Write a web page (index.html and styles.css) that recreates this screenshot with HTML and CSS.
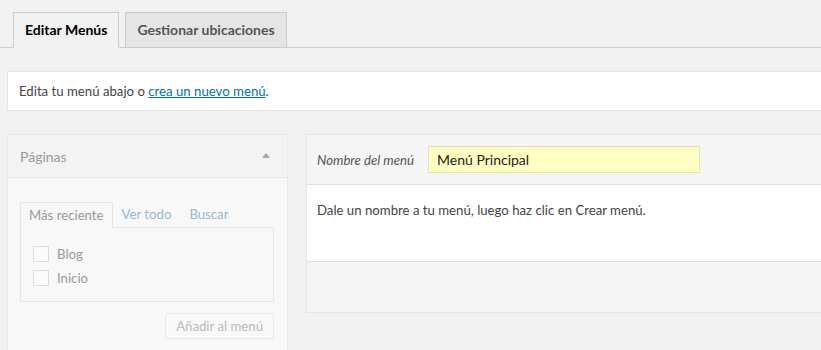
FILE: index.html
```html
<!DOCTYPE html>
<html lang="es">
<head>
<meta charset="utf-8">
<title>Menús</title>
<link rel="stylesheet" href="styles.css">
</head>
<body>
<div class="wrap">
  <nav class="nav-tabs">
    <a class="nav-tab active">Editar Menús</a>
    <a class="nav-tab">Gestionar ubicaciones</a>
  </nav>
  <div class="notice">Edita tu menú abajo o <a class="link">crea un nuevo menú</a>.</div>
  <div class="columns">
    <aside class="side-box">
      <div class="side-head">
        <span class="side-title">Páginas</span>
        <span class="arrow"></span>
      </div>
      <div class="side-body">
        <div class="inner-tabs">
          <span class="inner-tab active">Más reciente</span>
          <span class="inner-tab">Ver todo</span>
          <span class="inner-tab">Buscar</span>
        </div>
        <div class="inner-panel">
          <label class="check-row"><span class="checkbox"></span>Blog</label>
          <label class="check-row"><span class="checkbox"></span>Inicio</label>
        </div>
        <div class="btn-row"><span class="btn">Añadir al menú</span></div>
      </div>
    </aside>
    <section class="menu-box">
      <div class="menu-head">
        <span class="menu-label">Nombre del menú</span>
        <span class="menu-input">Menú Principal</span>
      </div>
      <div class="menu-body">Dale un nombre a tu menú, luego haz clic en Crear menú.</div>
      <div class="menu-foot"></div>
    </section>
  </div>
</div>
</body>
</html>
```

FILE: styles.css
```css
html, body {
  margin: 0;
  padding: 0;
  background: #f1f1f1;
  overflow: hidden;
}
body {
  font-family: Lato, "Liberation Sans", sans-serif;
  font-size: 13.2px;
  color: #444;
  width: 821px;
  height: 350px;
}
.wrap {
  width: 814px;
  padding: 12px 0 0 7px;
}
.nav-tabs {
  display: flex;
  border-bottom: 1px solid #ccc;
  margin-left: -7px;
  padding-left: 13px;
  height: 35px;
}
.nav-tab {
  display: block;
  box-sizing: border-box;
  height: 36px;
  padding: 0 11px;
  line-height: 34px;
  font-size: 14px;
  font-weight: 700;
  color: #555;
  background: #e5e5e5;
  border: 1px solid #ccc;
  margin-right: 6px;
}
.nav-tab.active {
  background: #f1f1f1;
  color: #000;
  border-bottom-color: #f1f1f1;
}
.notice {
  margin-top: 23px;
  height: 40px;
  box-sizing: border-box;
  background: #fff;
  border: 1px solid #e5e5e5;
  border-right: 0;
  padding: 0 11px;
  line-height: 38px;
  color: #444;
}
.link {
  color: #0073aa;
  text-decoration: underline;
}
.columns {
  display: flex;
  align-items: flex-start;
  margin-top: 23px;
  gap: 18px;
}
.side-box {
  width: 281px;
  flex: none;
  box-sizing: border-box;
  border: 1px solid #e9e9e9;
  background: #f8f8f8;
}
.side-head {
  height: 43px;
  box-sizing: border-box;
  border-bottom: 1px solid #e9e9e9;
  background: #f3f3f3;
  display: flex;
  align-items: center;
  justify-content: space-between;
  padding: 0 17px 0 12px;
}
.side-title {
  font-size: 14px;
  color: #999;
}
.arrow {
  width: 0;
  height: 0;
  border-left: 4px solid transparent;
  border-right: 4px solid transparent;
  border-bottom: 5px solid #aaa;
  margin-top: -2px;
}
.side-body {
  padding: 24px 13px 20px 12px;
}
.inner-tabs {
  display: flex;
  height: 25px;
  align-items: stretch;
}
.inner-tab {
  padding: 0 8px;
  line-height: 25px;
  color: #8fbcd4;
  margin-right: 2px;
}
.inner-tab.active {
  color: #999;
  border: 1px solid #e5e5e5;
  border-bottom: 0;
  background: #f8f8f8;
  height: 26px;
  box-sizing: border-box;
  padding: 0 8px;
  margin-right: 1px;
  position: relative;
  z-index: 1;
}
.inner-panel {
  border: 1px solid #e5e5e5;
  height: 75px;
  box-sizing: border-box;
  padding: 14px 12px 0;
}
.check-row {
  display: flex;
  align-items: center;
  height: 24px;
  color: #999;
}
.checkbox {
  width: 16px;
  height: 16px;
  box-sizing: border-box;
  border: 1px solid #ddd;
  background: #fbfbfb;
  margin-right: 8px;
}
.btn-row {
  display: flex;
  justify-content: flex-end;
  margin-top: 11px;
}
.btn {
  height: 26px;
  box-sizing: border-box;
  border: 1px solid #e8e8e8;
  border-radius: 3px;
  padding: 0 10px;
  line-height: 24px;
  color: #bbb;
  background: #f8f8f8;
}
.menu-box {
  flex: 1;
  border: 1px solid #e5e5e5;
  border-right: 0;
  background: #f5f5f5;
}
.menu-head {
  height: 50px;
  box-sizing: border-box;
  border-bottom: 1px solid #dfdfdf;
  display: flex;
  align-items: center;
  padding: 0 10px;
}
.menu-label {
  font-style: italic;
  color: #555;
  margin-right: 14px;
}
.menu-input {
  width: 272px;
  height: 27px;
  box-sizing: border-box;
  background: #ffffc2;
  border: 1px solid #e3e3b8;
  padding: 0 8px;
  line-height: 25px;
  font-size: 14px;
  color: #222;
}
.menu-body {
  background: #fff;
  height: 77px;
  box-sizing: border-box;
  padding: 17px 10px;
  border-bottom: 1px solid #dfdfdf;
  color: #444;
}
.menu-foot {
  height: 50px;
}
```
